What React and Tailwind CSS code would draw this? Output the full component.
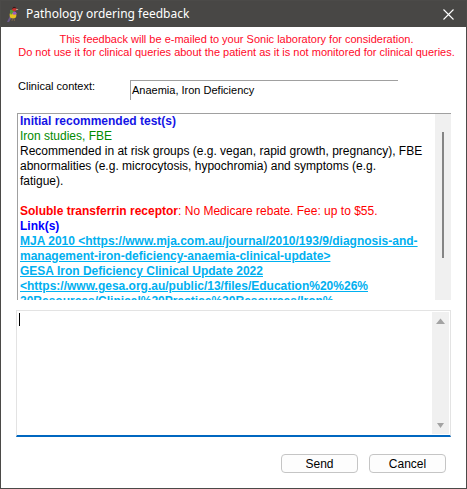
import React from 'react';

const Finch = () => (
  <svg width="14" height="18" viewBox="0 0 14 18" className="shrink-0">
    {/* tail */}
    <path d="M4 11 L1 17 L3 17 L6 12 Z" fill="#6b5a8a" />
    {/* body */}
    <ellipse cx="7" cy="10" rx="3.4" ry="3.6" fill="#e6c21f" />
    {/* chest */}
    <ellipse cx="8.4" cy="8.2" rx="2" ry="1.6" fill="#9b5bbf" />
    {/* back */}
    <path d="M4 5 Q6 4 8 6 L5 10 Q3.5 8 4 5 Z" fill="#4f9a3a" />
    {/* head */}
    <circle cx="8.3" cy="4" r="2.3" fill="#c9302c" />
    <path d="M6.2 3 Q8 1 10 2.4 L9.5 3.4 Q8 2.6 6.4 4 Z" fill="#222" />
    <path d="M10.4 4 L12.5 4.6 L10.4 5.2 Z" fill="#f2d3b0" />
    {/* legs */}
    <path d="M6.5 13.5 L6 16 M8 13.5 L8.5 16" stroke="#8a6d4a" strokeWidth="0.8" />
  </svg>
);

const Link = ({ children }) => (
  <div className="font-bold underline text-[#00b0f0] whitespace-nowrap">{children}</div>
);

export default function App() {
  return (
    <div
      className="w-[467px] h-[489px] bg-white border border-[#4b4a48] flex flex-col overflow-hidden"
      style={{ fontFamily: '"Liberation Sans", Arial, sans-serif' }}
    >
      {/* title bar */}
      <div className="h-[26px] bg-[#484745] flex items-center pl-[5px] pr-[10px] shrink-0">
        <Finch />
        <span
          className="ml-[6px] text-white text-[12px] leading-none"
          style={{ fontFamily: '"Noto Sans", "Open Sans", sans-serif' }}
        >
          Pathology ordering feedback
        </span>
        <svg width="11" height="11" viewBox="0 0 11 11" className="ml-auto mr-[2px]">
          <path d="M0.5 0.5 L10.5 10.5 M10.5 0.5 L0.5 10.5" stroke="#fff" strokeWidth="1.1" />
        </svg>
      </div>

      {/* warning */}
      <div className="pt-[6px] text-center text-[11px] leading-[13px] text-[#ff0a2a] whitespace-nowrap">
        <div className="pl-[6px]">This feedback will be e-mailed to your Sonic laboratory for consideration.</div>
        <div className="pl-[6px]">Do not use it for clinical queries about the patient as it is not monitored for clinical queries.</div>
      </div>

      {/* clinical context */}
      <div className="flex mt-[21px] pl-[17px] text-[11px] text-black">
        <div className="w-[112px] leading-[13px]">Clinical context:</div>
        <div className="w-[268px] h-[20px] border-t border-l border-[#a0a0a0] pl-[1px] pt-[2px] leading-[14px]">
          Anaemia, Iron Deficiency
        </div>
      </div>

      {/* recommendation */}
      <div className="flex ml-[16px] mt-[13px] w-[434px] h-[187px] border-t border-l border-[#a0a0a0] overflow-hidden">
        <div className="flex-1 pl-[2px] text-[12px] leading-[15px] text-black overflow-hidden">
          <div className="font-bold text-[#1414e6]">Initial recommended test(s)</div>
          <div className="text-[#008a00]">Iron studies, FBE</div>
          <div className="whitespace-nowrap">
            Recommended in at risk groups (e.g. vegan, rapid growth, pregnancy), FBE
          </div>
          <div className="whitespace-nowrap">
            abnormalities (e.g. microcytosis, hypochromia) and symptoms (e.g.
          </div>
          <div>fatigue).</div>
          <div className="h-[15px]" />
          <div className="text-[#ff0000]">
            <span className="font-bold">Soluble transferrin receptor</span>: No Medicare rebate. Fee: up to $55.
          </div>
          <div className="font-bold text-[#0000ff]">Link(s)</div>
          <Link>MJA 2010 &lt;https://www.mja.com.au/journal/2010/193/9/diagnosis-and-</Link>
          <Link>management-iron-deficiency-anaemia-clinical-update&gt;</Link>
          <Link>GESA Iron Deficiency Clinical Update 2022</Link>
          <Link>&lt;https://www.gesa.org.au/public/13/files/Education%20%26%</Link>
          <Link>20Resources/Clinical%20Practice%20Resources/Iron%</Link>
        </div>
        <div className="w-[16px] bg-[#f0f0f0] flex justify-center pt-[18px]">
          <div className="w-[2px] h-[126px] bg-[#858585]" />
        </div>
      </div>

      {/* feedback memo */}
      <div className="flex ml-[15px] mt-[10px] w-[435px] h-[127px] border border-[#e3e3e3] border-b-2 border-b-[#0067c0]">
        <div className="flex-1 pl-[2px] pt-[2px]">
          <div className="w-[1px] h-[13px] bg-black" />
        </div>
        <div className="w-[17px] mt-[1px] mb-[1px] mr-[1px] bg-[#f0f0f0] flex flex-col items-center justify-between py-[6px]">
          <svg width="9" height="6" viewBox="0 0 9 6">
            <path d="M0 6 L4.5 0.5 L9 6 Z" fill="#a3a3a3" />
          </svg>
          <svg width="7" height="5" viewBox="0 0 7 5">
            <path d="M0 0 L7 0 L3.5 5 Z" fill="#a3a3a3" />
          </svg>
        </div>
      </div>

      {/* buttons */}
      <div className="flex justify-end gap-[11px] mt-[17px] pr-[20px] text-[12px]">
        <button className="w-[77px] h-[19px] rounded-[4px] border border-[#c5c5c5] bg-[#fdfdfd] text-black leading-none">
          Send
        </button>
        <button className="w-[77px] h-[19px] rounded-[4px] border border-[#c5c5c5] bg-[#fdfdfd] text-black leading-none">
          Cancel
        </button>
      </div>
    </div>
  );
}
